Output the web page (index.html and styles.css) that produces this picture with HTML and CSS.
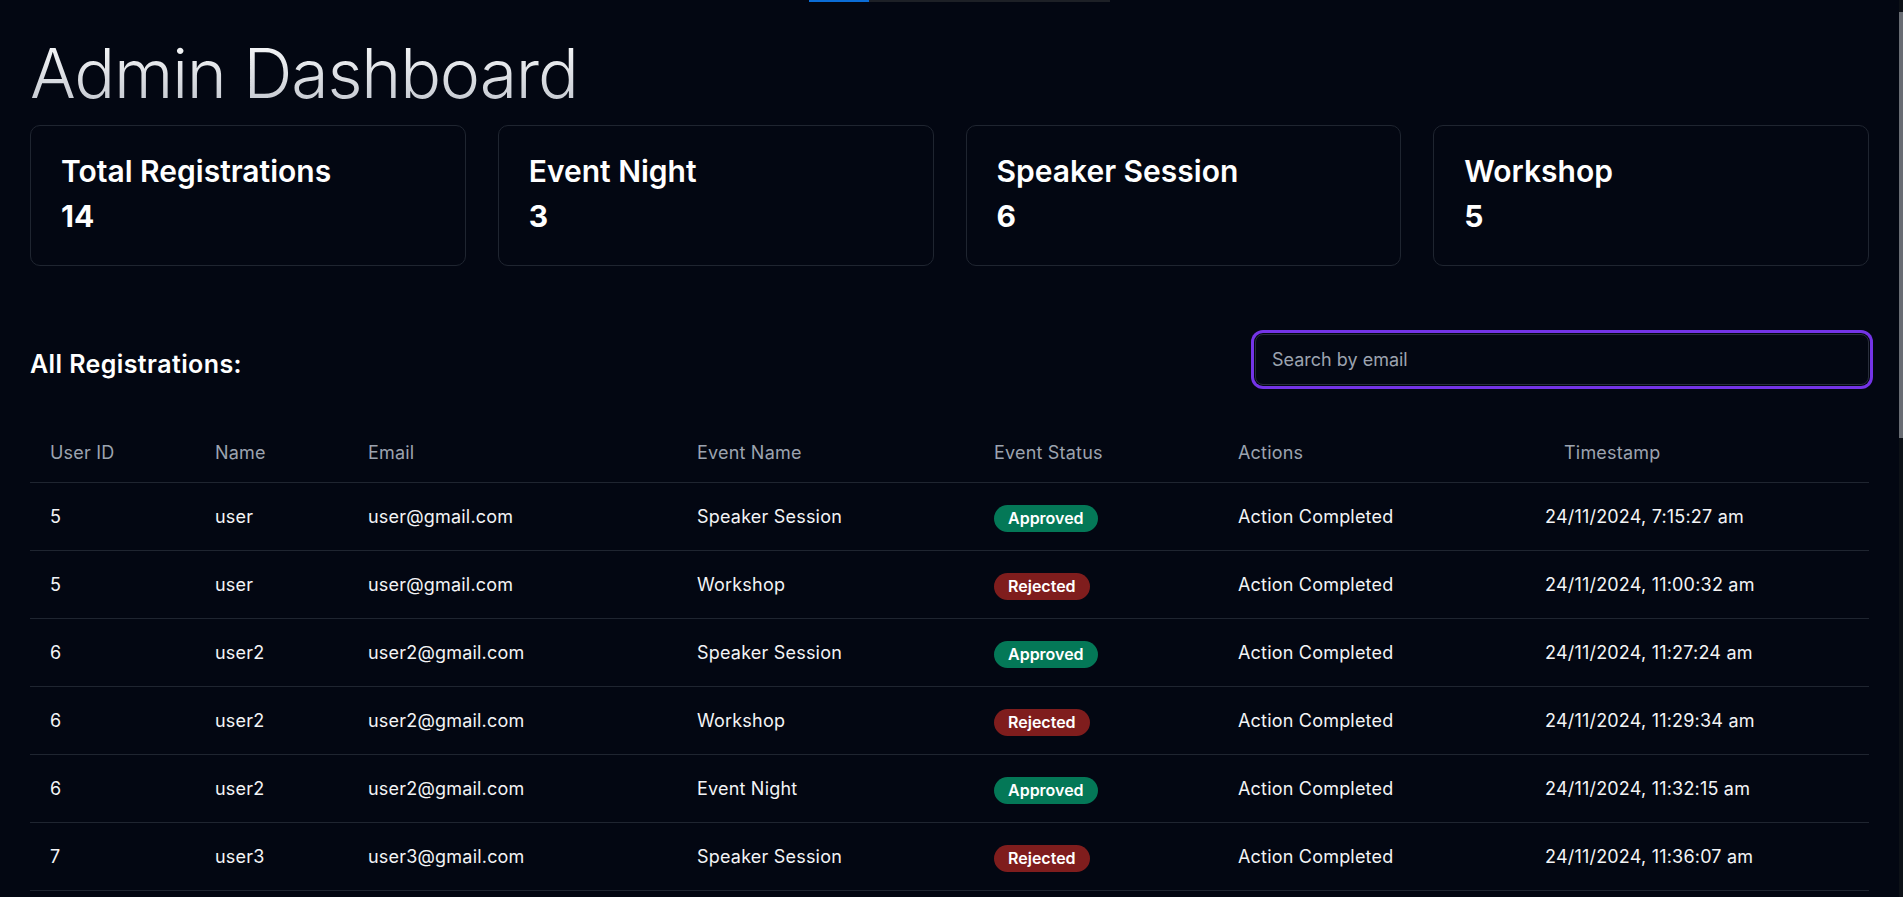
FILE: index.html
```html
<!DOCTYPE html>
<html lang="en">
<head>
<meta charset="utf-8">
<title>Admin Dashboard</title>
<link rel="stylesheet" href="styles.css">
</head>
<body>
<div class="topbar"><div class="topbar-fill"></div></div>
<div class="scrollbar" aria-hidden="true"><div class="scrollbar-thumb"></div></div>
<main class="page">
  <h1 class="title">Admin Dashboard</h1>

  <section class="stats">
    <div class="card"><h2 class="card-title">Total Registrations</h2><p class="card-value">14</p></div>
    <div class="card"><h2 class="card-title">Event Night</h2><p class="card-value">3</p></div>
    <div class="card"><h2 class="card-title">Speaker Session</h2><p class="card-value">6</p></div>
    <div class="card"><h2 class="card-title">Workshop</h2><p class="card-value">5</p></div>
  </section>

  <section class="list-head">
    <h3 class="list-title">All Registrations:</h3>
    <input class="search" type="text" placeholder="Search by email">
  </section>

  <table class="reg-table">
    <colgroup>
      <col class="c-id"><col class="c-name"><col class="c-email"><col class="c-event"><col class="c-status"><col class="c-actions"><col class="c-time">
    </colgroup>
    <thead>
      <tr><th>User ID</th><th>Name</th><th>Email</th><th>Event Name</th><th>Event Status</th><th>Actions</th><th class="th-time">Timestamp</th></tr>
    </thead>
    <tbody>
      <tr><td>5</td><td>user</td><td>user@gmail.com</td><td>Speaker Session</td><td><span class="badge ok">Approved</span></td><td>Action Completed</td><td>24/11/2024, 7:15:27 am</td></tr>
      <tr><td>5</td><td>user</td><td>user@gmail.com</td><td>Workshop</td><td><span class="badge no">Rejected</span></td><td>Action Completed</td><td>24/11/2024, 11:00:32 am</td></tr>
      <tr><td>6</td><td>user2</td><td>user2@gmail.com</td><td>Speaker Session</td><td><span class="badge ok">Approved</span></td><td>Action Completed</td><td>24/11/2024, 11:27:24 am</td></tr>
      <tr><td>6</td><td>user2</td><td>user2@gmail.com</td><td>Workshop</td><td><span class="badge no">Rejected</span></td><td>Action Completed</td><td>24/11/2024, 11:29:34 am</td></tr>
      <tr><td>6</td><td>user2</td><td>user2@gmail.com</td><td>Event Night</td><td><span class="badge ok">Approved</span></td><td>Action Completed</td><td>24/11/2024, 11:32:15 am</td></tr>
      <tr><td>7</td><td>user3</td><td>user3@gmail.com</td><td>Speaker Session</td><td><span class="badge no">Rejected</span></td><td>Action Completed</td><td>24/11/2024, 11:36:07 am</td></tr>
      <tr><td>7</td><td>user3</td><td>user3@gmail.com</td><td>Workshop</td><td><span class="badge ok">Approved</span></td><td>Action Completed</td><td>24/11/2024, 11:38:41 am</td></tr>
      <tr><td>7</td><td>user3</td><td>user3@gmail.com</td><td>Event Night</td><td><span class="badge ok">Approved</span></td><td>Action Completed</td><td>24/11/2024, 11:40:12 am</td></tr>
      <tr><td>8</td><td>user4</td><td>user4@gmail.com</td><td>Speaker Session</td><td><span class="badge ok">Approved</span></td><td>Action Completed</td><td>24/11/2024, 11:45:03 am</td></tr>
      <tr><td>8</td><td>user4</td><td>user4@gmail.com</td><td>Workshop</td><td><span class="badge no">Rejected</span></td><td>Action Completed</td><td>24/11/2024, 11:47:29 am</td></tr>
      <tr><td>9</td><td>user5</td><td>user5@gmail.com</td><td>Speaker Session</td><td><span class="badge ok">Approved</span></td><td>Action Completed</td><td>24/11/2024, 11:52:50 am</td></tr>
      <tr><td>9</td><td>user5</td><td>user5@gmail.com</td><td>Workshop</td><td><span class="badge ok">Approved</span></td><td>Action Completed</td><td>24/11/2024, 11:55:18 am</td></tr>
      <tr><td>9</td><td>user5</td><td>user5@gmail.com</td><td>Event Night</td><td><span class="badge no">Rejected</span></td><td>Action Completed</td><td>24/11/2024, 11:58:36 am</td></tr>
      <tr><td>10</td><td>user6</td><td>user6@gmail.com</td><td>Speaker Session</td><td><span class="badge ok">Approved</span></td><td>Action Completed</td><td>24/11/2024, 12:03:44 pm</td></tr>
    </tbody>
  </table>
</main>
</body>
</html>
```

FILE: styles.css
```css
html {
  background: #030712;
}
html::-webkit-scrollbar {
  display: none;
}
body {
  margin: 0;
  background: #030712;
  color: #f3f4f6;
  font-family: Inter, "Liberation Sans", sans-serif;
}
.topbar {
  height: 2px;
  width: 301px;
  margin-left: 809px;
  background: #1d2026;
}
.topbar-fill {
  height: 100%;
  width: 60px;
  background: #0b6dd6;
}
.scrollbar {
  position: fixed;
  top: 0;
  right: 0;
  width: 4px;
  height: 100vh;
  background: #0d1117;
}
.scrollbar-thumb {
  margin-top: 12px;
  height: 426px;
  background: #686c73;
}
.page {
  padding: 0 34px 64px 30px;
}
.title {
  margin: 37px 0 0;
  font-size: 68px;
  line-height: 68px;
  font-weight: 350;
  letter-spacing: -1.2px;
  background: linear-gradient(180deg, #f9fafb 0%, #c3c7cf 100%);
  -webkit-background-clip: text;
  background-clip: text;
  color: transparent;
  width: max-content;
}
.stats {
  margin-top: 18px;
  display: grid;
  grid-template-columns: repeat(4, 1fr);
  gap: 32px;
}
.card {
  border: 1px solid #1f2530;
  border-radius: 10px;
  padding: 27px 30px 31px;
}
.card-title {
  margin: 0;
  font-size: 30px;
  line-height: 36px;
  font-weight: 600;
  color: #ffffff;
}
.card-value {
  margin: 9px 0 0;
  font-size: 30px;
  line-height: 36px;
  font-weight: 700;
  color: #ffffff;
}
.list-head {
  margin-top: 68px;
  display: flex;
  justify-content: space-between;
  align-items: center;
}
.list-title {
  margin: 0;
  padding-top: 8px;
  font-size: 25px;
  line-height: 32px;
  font-weight: 600;
  letter-spacing: 0.4px;
  color: #ffffff;
}
.search {
  box-sizing: border-box;
  width: 614px;
  padding: 11px 16px;
  font-family: inherit;
  font-size: 18px;
  line-height: 27px;
  color: #e5e7eb;
  background: #030712;
  border: 1px solid #282e3a;
  border-radius: 8px;
  outline: none;
  box-shadow: 0 0 0 1px #030712, 0 0 0 4px #7434e6;
}
.search::placeholder {
  color: #9ca3af;
}
.reg-table {
  margin-top: 38px;
  width: 100%;
  table-layout: fixed;
  border-collapse: separate;
  border-spacing: 0;
  font-size: 18px;
  line-height: 27px;
  letter-spacing: 0.2px;
}
.c-id { width: 165px; }
.c-name { width: 153px; }
.c-email { width: 329px; }
.c-event { width: 297px; }
.c-status { width: 244px; }
.c-actions { width: 307px; }
.c-time { width: 344px; }
.reg-table th {
  text-align: left;
  font-weight: 400;
  color: #9ca3af;
  padding: 16px 20px;
  border-bottom: 1px solid #1f2530;
}
.reg-table th.th-time {
  padding-left: 39px;
}
.reg-table td {
  padding: 20px 20px;
  color: #f3f4f6;
  border-bottom: 1px solid #1f2530;
  white-space: nowrap;
}
.badge {
  display: inline-block;
  vertical-align: middle;
  margin: -2px 0;
  padding: 4px 14px;
  border-radius: 999px;
  font-size: 16px;
  line-height: 19px;
  font-weight: 600;
  letter-spacing: 0;
  color: #ffffff;
}
.badge.ok {
  background: #047857;
}
.badge.no {
  background: #7f1d1d;
}
```
